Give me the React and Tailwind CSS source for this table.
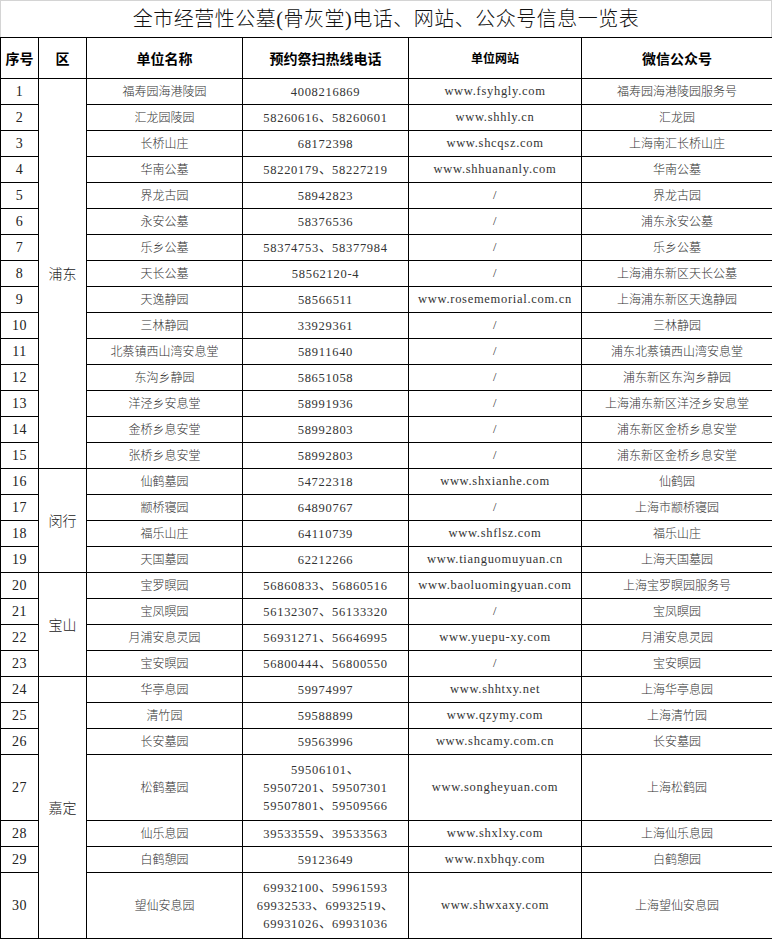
import React from 'react';

const ROWS = [
  ['福寿园海港陵园', '4008216869', 'www.fsyhgly.com', '福寿园海港陵园服务号'],
  ['汇龙园陵园', '58260616、58260601', 'www.shhly.cn', '汇龙园'],
  ['长桥山庄', '68172398', 'www.shcqsz.com', '上海南汇长桥山庄'],
  ['华南公墓', '58220179、58227219', 'www.shhuananly.com', '华南公墓'],
  ['界龙古园', '58942823', '/', '界龙古园'],
  ['永安公墓', '58376536', '/', '浦东永安公墓'],
  ['乐乡公墓', '58374753、58377984', '/', '乐乡公墓'],
  ['天长公墓', '58562120-4', '/', '上海浦东新区天长公墓'],
  ['天逸静园', '58566511', 'www.rosememorial.com.cn', '上海浦东新区天逸静园'],
  ['三林静园', '33929361', '/', '三林静园'],
  ['北蔡镇西山湾安息堂', '58911640', '/', '浦东北蔡镇西山湾安息堂'],
  ['东沟乡静园', '58651058', '/', '浦东新区东沟乡静园'],
  ['洋泾乡安息堂', '58991936', '/', '上海浦东新区洋泾乡安息堂'],
  ['金桥乡息安堂', '58992803', '/', '浦东新区金桥乡息安堂'],
  ['张桥乡息安堂', '58992803', '/', '浦东新区金桥乡息安堂'],
  ['仙鹤墓园', '54722318', 'www.shxianhe.com', '仙鹤园'],
  ['颛桥寝园', '64890767', '/', '上海市颛桥寝园'],
  ['福乐山庄', '64110739', 'www.shflsz.com', '福乐山庄'],
  ['天国墓园', '62212266', 'www.tianguomuyuan.cn', '上海天国墓园'],
  ['宝罗瞑园', '56860833、56860516', 'www.baoluomingyuan.com', '上海宝罗瞑园服务号'],
  ['宝凤瞑园', '56132307、56133320', '/', '宝凤瞑园'],
  ['月浦安息灵园', '56931271、56646995', 'www.yuepu-xy.com', '月浦安息灵园'],
  ['宝安瞑园', '56800444、56800550', '/', '宝安瞑园'],
  ['华亭息园', '59974997', 'www.shhtxy.net', '上海华亭息园'],
  ['清竹园', '59588899', 'www.qzymy.com', '上海清竹园'],
  ['长安墓园', '59563996', 'www.shcamy.com.cn', '长安墓园'],
  ['松鹤墓园', ['59506101、', '59507201、59507301', '59507801、59509566'], 'www.songheyuan.com', '上海松鹤园'],
  ['仙乐息园', '39533559、39533563', 'www.shxlxy.com', '上海仙乐息园'],
  ['白鹤憩园', '59123649', 'www.nxbhqy.com', '白鹤憩园'],
  ['望仙安息园', ['69932100、59961593', '69932533、69932519、', '69931026、69931036'], 'www.shwxaxy.com', '上海望仙安息园'],
];

const DISTRICTS = { 0: ['浦东', 15], 15: ['闵行', 4], 19: ['宝山', 4], 23: ['嘉定', 7] };

const font = 'font-["Liberation_Serif","Noto_Sans_CJK_SC",serif]';

export default function App() {
  return (
    <div className={`w-[772px] bg-white text-[#333] ${font}`}>
      {/* title */}
      <div className="h-[37px] border-t border-x border-[#d4d4d4] flex items-center justify-center text-[20px] font-light text-[#111] tracking-[0.5px]">
        全市经营性公墓(骨灰堂)电话、网站、公众号信息一览表
      </div>

      <table className="table-fixed border-collapse w-[772px]">
        <colgroup>
          <col className="w-[38px]" />
          <col className="w-[48px]" />
          <col className="w-[156px]" />
          <col className="w-[166px]" />
          <col className="w-[173px]" />
          <col className="w-[191px]" />
        </colgroup>
        <thead>
          <tr className="h-[41px] font-bold text-[#000] font-['Noto_Sans_CJK_SC',sans-serif]">
            <th className="border border-black text-[14px] p-0">序号</th>
            <th className="border border-black text-[14px] p-0">区</th>
            <th className="border border-black text-[14px] p-0">单位名称</th>
            <th className="border border-black text-[14px] p-0">预约祭扫热线电话</th>
            <th className="border border-black text-[12px] p-0">单位网站</th>
            <th className="border border-black text-[14px] p-0">微信公众号</th>
          </tr>
        </thead>
        <tbody>
          {ROWS.map((r, i) => {
            const multi = Array.isArray(r[1]);
            const d = DISTRICTS[i];
            return (
              <tr key={i} className={multi ? 'h-[66px]' : 'h-[26px]'}>
                <td className="border border-black text-center text-[14px] tracking-[0.5px] p-0 text-[#222]">{i + 1}</td>
                {d && (
                  <td rowSpan={d[1]} className="border border-black text-center text-[14px] p-0 font-['Noto_Sans_CJK_SC',sans-serif] font-light text-[#222]">
                    {d[0]}
                  </td>
                )}
                <td className="border border-black text-center text-[12px] p-0 font-light">{r[0]}</td>
                <td className="border border-black text-center text-[12.5px] tracking-[0.7px] leading-[18px] p-0">
                  {multi ? r[1].map(l => <div key={l}>{l}</div>) : r[1]}
                </td>
                <td className="border border-black text-center text-[12.5px] tracking-[0.7px] p-0">{r[2]}</td>
                <td className="border border-black text-center text-[12px] p-0 font-light">{r[3]}</td>
              </tr>
            );
          })}
        </tbody>
      </table>
    </div>
  );
}
